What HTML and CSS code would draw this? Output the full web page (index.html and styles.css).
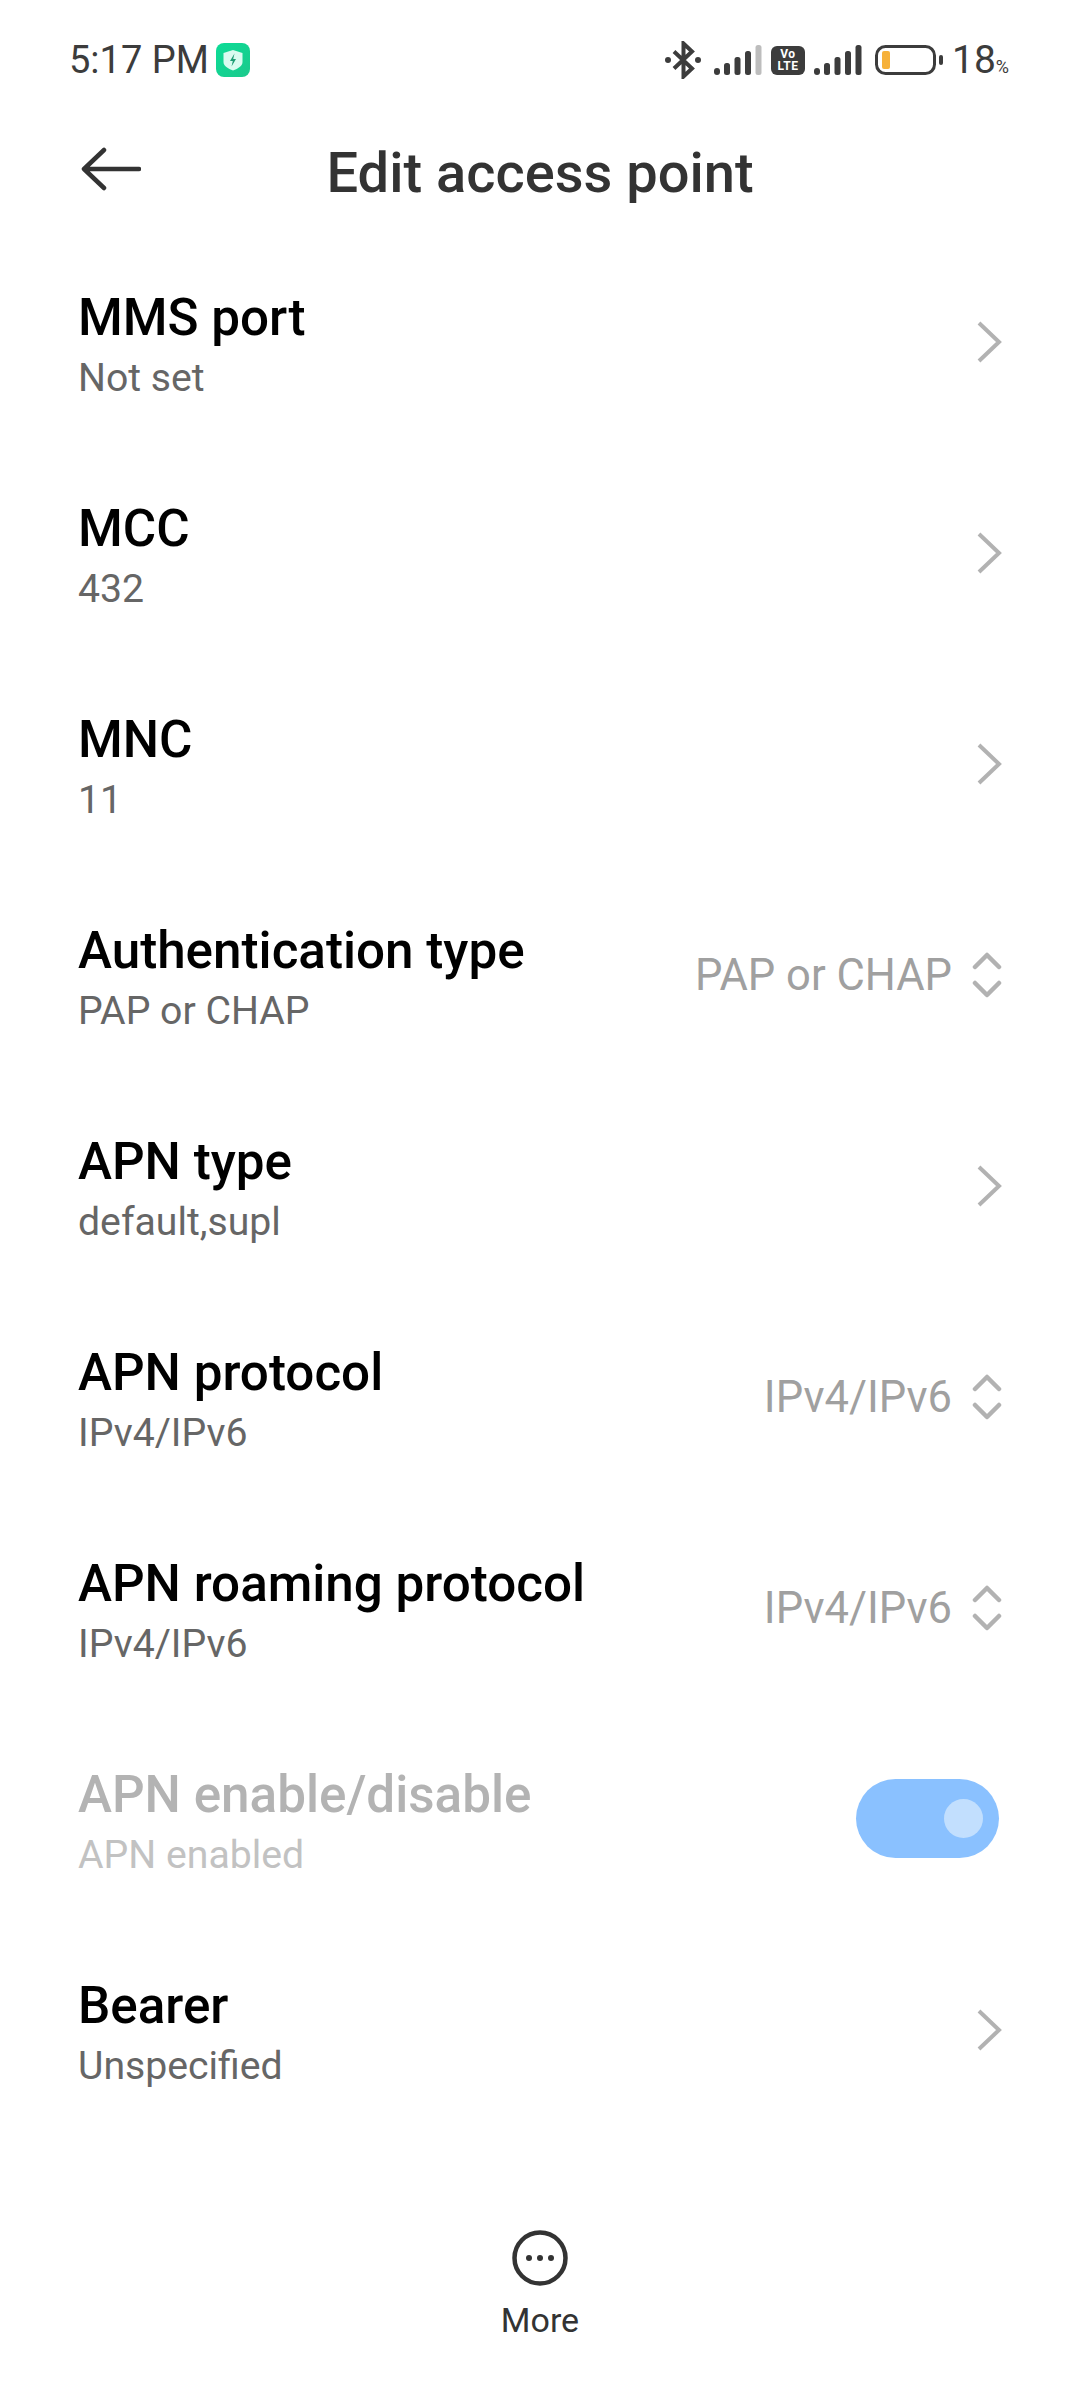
FILE: index.html
```html
<!DOCTYPE html>
<html lang="en">
<head>
<meta charset="utf-8">
<title>Edit access point</title>
<link rel="stylesheet" href="styles.css">
</head>
<body>
<div class="screen">
  <div class="status">
    <div class="status-left">
      <span class="time">5:17 PM</span>
      <svg class="shield" width="34" height="34" viewBox="0 0 34 34"><defs><linearGradient id="g" x1="0" y1="0" x2="1" y2="1"><stop offset="0" stop-color="#0bdc96"/><stop offset="1" stop-color="#1cc98c"/></linearGradient></defs><rect width="34" height="34" rx="8" fill="url(#g)"/><path d="M17 7l9.500 3v9c0 4-4.500 6.500-9.500 8.500C12 25.500 7.500 23 7.500 19v-9z" fill="#d9fbf0"/><path d="M18.500 10.500l-4.500 7.500h2.800l-1.300 5.500 4.500-7.500h-2.800z" fill="#1d9c74"/></svg>
    </div>
    <div class="status-right">
      <svg class="bt" width="36" height="38" viewBox="0 0 36 38"><path d="M9 10.500l18 17-8.500 8V2.500l8.500 8-18 17" fill="none" stroke="#3c3c3c" stroke-width="4"/><circle cx="3" cy="19" r="3" fill="#3c3c3c"/><circle cx="33" cy="19" r="3" fill="#3c3c3c"/></svg>
      <svg class="signal" width="48" height="30" viewBox="0 0 48 30"><rect x="0" y="23" width="6" height="7" rx="3" fill="#3c3c3c"/><rect x="10" y="18" width="6" height="12" rx="2.500" fill="#3c3c3c"/><rect x="20.500" y="12" width="6" height="18" rx="2.500" fill="#3c3c3c"/><rect x="31" y="6" width="6" height="24" rx="2.500" fill="#3c3c3c"/><rect x="41.500" y="0" width="6" height="30" rx="2.500" fill="#bdbdbd"/></svg>
      <span class="volte"><span>Vo</span><span>LTE</span></span>
      <svg class="signal signal-last" width="48" height="30" viewBox="0 0 48 30"><rect x="0" y="23" width="6" height="7" rx="3" fill="#3c3c3c"/><rect x="10" y="18" width="6" height="12" rx="2.500" fill="#3c3c3c"/><rect x="20.500" y="12" width="6" height="18" rx="2.500" fill="#3c3c3c"/><rect x="31" y="6" width="6" height="24" rx="2.500" fill="#3c3c3c"/><rect x="41.500" y="0" width="6" height="30" rx="2.500" fill="#3c3c3c"/></svg>
      <svg class="battery" width="69" height="30" viewBox="0 0 69 30"><rect x="1.500" y="1.500" width="58" height="27" rx="9" fill="none" stroke="#3c3c3c" stroke-width="3"/><rect x="7" y="6" width="8" height="18" rx="2" fill="#f6b13a"/><rect x="64" y="10" width="4" height="10" rx="2" fill="#3c3c3c"/></svg>
      <span class="pct">18<small>%</small></span>
    </div>
  </div>

  <header class="appbar">
    <svg class="back" width="60" height="44" viewBox="0 0 60 44"><path d="M23 3L3 22l20 19M3 22h55" fill="none" stroke="#333" stroke-width="4.500" stroke-linecap="round" stroke-linejoin="round"/></svg>
    <h1 class="appbar-title">Edit access point</h1>
  </header>

  <main class="list">
    <div class="row">
      <div class="text"><div class="name">MMS port</div><div class="sub">Not set</div></div>
      <svg class="chev" width="26" height="44" viewBox="0 0 26 44"><path d="M3 3l20 19L3 41" fill="none" stroke="#b2b2b2" stroke-width="4"/></svg>
    </div>
    <div class="row">
      <div class="text"><div class="name">MCC</div><div class="sub">432</div></div>
      <svg class="chev" width="26" height="44" viewBox="0 0 26 44"><path d="M3 3l20 19L3 41" fill="none" stroke="#b2b2b2" stroke-width="4"/></svg>
    </div>
    <div class="row">
      <div class="text"><div class="name">MNC</div><div class="sub">11</div></div>
      <svg class="chev" width="26" height="44" viewBox="0 0 26 44"><path d="M3 3l20 19L3 41" fill="none" stroke="#b2b2b2" stroke-width="4"/></svg>
    </div>
    <div class="row">
      <div class="text"><div class="name">Authentication type</div><div class="sub">PAP or CHAP</div></div>
      <span class="value">PAP or CHAP</span>
      <svg class="updown" width="30" height="46" viewBox="0 0 30 46"><path d="M3 15L15 3l12 12M3 31l12 12 12-12" fill="none" stroke="#b2b2b2" stroke-width="4.500" stroke-linecap="round" stroke-linejoin="round"/></svg>
    </div>
    <div class="row">
      <div class="text"><div class="name">APN type</div><div class="sub">default,supl</div></div>
      <svg class="chev" width="26" height="44" viewBox="0 0 26 44"><path d="M3 3l20 19L3 41" fill="none" stroke="#b2b2b2" stroke-width="4"/></svg>
    </div>
    <div class="row">
      <div class="text"><div class="name">APN protocol</div><div class="sub">IPv4/IPv6</div></div>
      <span class="value">IPv4/IPv6</span>
      <svg class="updown" width="30" height="46" viewBox="0 0 30 46"><path d="M3 15L15 3l12 12M3 31l12 12 12-12" fill="none" stroke="#b2b2b2" stroke-width="4.500" stroke-linecap="round" stroke-linejoin="round"/></svg>
    </div>
    <div class="row">
      <div class="text"><div class="name">APN roaming protocol</div><div class="sub">IPv4/IPv6</div></div>
      <span class="value">IPv4/IPv6</span>
      <svg class="updown" width="30" height="46" viewBox="0 0 30 46"><path d="M3 15L15 3l12 12M3 31l12 12 12-12" fill="none" stroke="#b2b2b2" stroke-width="4.500" stroke-linecap="round" stroke-linejoin="round"/></svg>
    </div>
    <div class="row row-disabled">
      <div class="text"><div class="name">APN enable/disable</div><div class="sub">APN enabled</div></div>
      <span class="toggle"><span class="knob"></span></span>
    </div>
    <div class="row">
      <div class="text"><div class="name">Bearer</div><div class="sub">Unspecified</div></div>
      <svg class="chev" width="26" height="44" viewBox="0 0 26 44"><path d="M3 3l20 19L3 41" fill="none" stroke="#b2b2b2" stroke-width="4"/></svg>
    </div>
  </main>

  <footer class="more">
    <svg class="more-icon" width="56" height="56" viewBox="0 0 56 56"><circle cx="28" cy="28" r="25.500" fill="none" stroke="#333" stroke-width="4.500"/><circle cx="17" cy="28" r="3" fill="#333"/><circle cx="28" cy="28" r="3" fill="#333"/><circle cx="39" cy="28" r="3" fill="#333"/></svg>
    <span class="more-label">More</span>
  </footer>
</div>
</body>
</html>
```
FILE: styles.css
```css
* { box-sizing: border-box; }
html, body { margin: 0; padding: 0; background: #fff; }
body { font-family: Roboto, "Noto Sans", sans-serif; }
.screen { width: 1080px; height: 2400px; display: flex; flex-direction: column; overflow: hidden; position: relative; }

.status { height: 118px; padding: 2px 71px 0 69px; display: flex; justify-content: space-between; align-items: center; color: #3c3c3c; }
.status-left { display: flex; align-items: center; gap: 7px; }
.time { font-size: 38px; line-height: 42px; }
.status-right { display: flex; align-items: center; }
.bt { margin-right: 13px; }
.signal { margin-right: 9px; }
.signal-last { margin-right: 13px; }
.volte { width: 34px; height: 29px; margin-right: 9px; border-radius: 6px; background: #3c3c3c; color: #fff; font-size: 12px; font-weight: 700; letter-spacing: 0.5px; line-height: 12px; display: flex; flex-direction: column; align-items: center; justify-content: center; }
.battery { margin-right: 8px; }
.pct { font-size: 39px; line-height: 42px; padding-top: 6px; }
.pct small { font-size: 18px; }

.appbar { height: 118px; padding: 0 0 16px 81px; display: flex; align-items: center; position: relative; }
.appbar-title { margin: 0; position: absolute; left: 0; right: 0; top: 25px; text-align: center; font-size: 56px; font-weight: 500; color: #333; line-height: 60px; }

.list { display: flex; flex-direction: column; }
.row { height: 211px; padding: 0 78px; display: flex; align-items: center; }
.text { flex: 1; display: flex; flex-direction: column; padding-top: 7px; }
.name { font-size: 51.2px; line-height: 60px; font-weight: 500; color: #000; }
.sub { font-size: 39.2px; line-height: 50px; color: #666; margin-top: 5px; }
.value { font-size: 43.5px; color: #a0a0a0; margin-right: 20px; padding-top: 2px; }
.row-disabled .name { color: #b3b3b3; }
.row-disabled .sub { color: #c2c2c2; }
.toggle { width: 143px; height: 79px; margin-right: 3px; border-radius: 40px; background: #8ac1ff; display: flex; align-items: center; justify-content: flex-end; padding-right: 16px; }
.knob { width: 39px; height: 39px; border-radius: 50%; background: #c2dffe; }

.more { position: absolute; left: 0; width: 1080px; top: 2230px; display: flex; flex-direction: column; align-items: center; }
.more-label { font-size: 34px; line-height: 40px; color: #333; margin-top: 14px; }
```
